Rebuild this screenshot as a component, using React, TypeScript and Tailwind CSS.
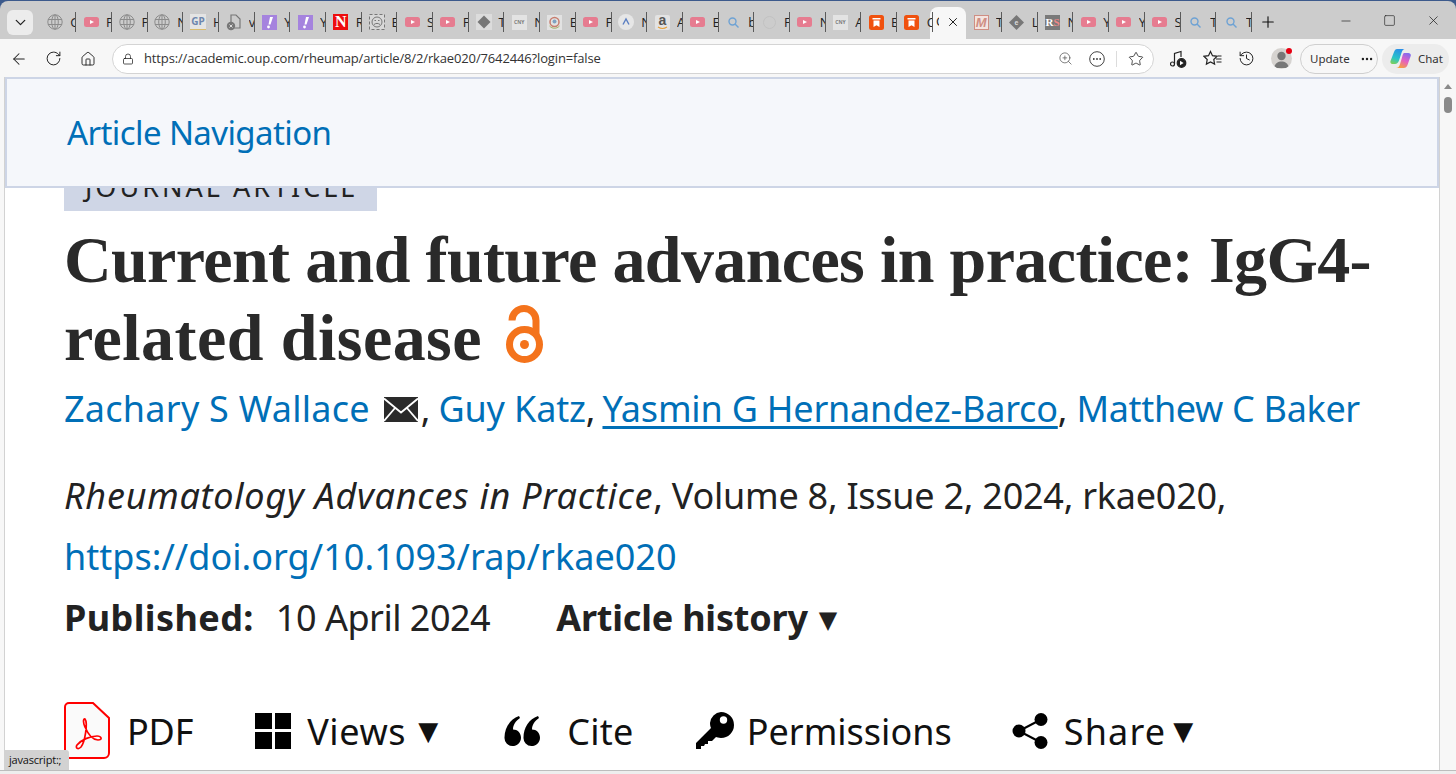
import React from "react";
import { ArrowLeft, RotateCw, Home, Lock, ZoomIn, Star, History, X, Minus, Square, Plus, ChevronDown, MoreHorizontal } from "lucide-react";

const Globe = () => (
  <svg width="16" height="16" viewBox="0 0 16 16" fill="none" stroke="#8c8c8c" strokeWidth="1"><circle cx="8" cy="8" r="7.2"/><ellipse cx="8" cy="8" rx="3.3" ry="7.2"/><path d="M1 5.5h14M1 10.5h14M8 1v14"/></svg>
);
const Yt = () => (
  <svg width="15" height="10" viewBox="0 0 15 10"><rect width="15" height="10" rx="2.5" fill="#e67c90"/><path d="M6 3l4 2-4 2z" fill="#fff"/></svg>
);
const Gp = () => <div className="w-[16px] h-[16px] bg-[#e4e4e4] text-[#6d86ad] text-[10px] font-bold leading-[15px] text-center border-b border-[#d9bb6b]">GP</div>;
const Doc = () => (
  <svg width="16" height="17" viewBox="0 0 16 17" fill="none"><path d="M5 1h5l4 4v9H5z" stroke="#777" strokeWidth="1.2"/><circle cx="5" cy="12" r="4.2" fill="#777"/><path d="M3.500 10.500l3 3m0-3l-3 3" stroke="#ddd"/></svg>
);
const Purple = () => (
  <svg width="15" height="15" viewBox="0 0 15 15"><rect width="15" height="15" fill="#a583de"/><path d="M8 2h3L8.500 9.500H6.500z" fill="#fff"/><circle cx="6.500" cy="12" r="1.400" fill="#fff"/></svg>
);
const RedN = () => <div className="w-[15px] h-[16px] bg-[#ee0d0d] text-white text-[16px] font-bold leading-[16px] text-center font-['Liberation_Serif',serif]">N</div>;
const Face = () => (
  <svg width="16" height="16" viewBox="0 0 16 16" fill="none" stroke="#777"><rect x="0.5" y="0.5" width="15" height="15" fill="#d8d8d8" strokeDasharray="3 2"/><circle cx="8" cy="8" r="5"/><path d="M5 10.500c2-1.500 4-1.500 6 0M5.500 6.500h1.500M9 6.500h1.500"/></svg>
);
const Diamond = () => (
  <svg width="16" height="16" viewBox="0 0 16 16"><rect width="16" height="16" fill="#dcdcdc"/><path d="M8 1.500L14.500 8 8 14.500 1.500 8z" fill="#777"/></svg>
);
const Cny = () => <div className="w-[15px] h-[15px] bg-[#e3e3e3] text-[#7d7d7d] text-[5px] font-bold leading-[15px] text-center">CNY</div>;
const Emblem = () => (
  <svg width="15" height="15" viewBox="0 0 15 15" fill="none"><rect width="15" height="15" fill="#e2e2e2"/><circle cx="7.500" cy="7" r="4.500" stroke="#c77d6e" strokeWidth="1.500"/><circle cx="7.500" cy="6.500" r="2" fill="#7fa2c2"/><path d="M2.500 11c3 3 7 3 10 0" stroke="#9fae64"/></svg>
);
const Lambda = () => (
  <svg width="16" height="16" viewBox="0 0 16 16" fill="none"><circle cx="8" cy="8" r="8" fill="#e6e6e6"/><path d="M5 10.500L8 5l3 5.500" stroke="#5b7fc2" strokeWidth="1.400"/></svg>
);
const Amazon = () => (
  <svg width="15" height="15" viewBox="0 0 15 15" fill="none"><rect width="15" height="15" rx="2" fill="#e3e3e3"/><text x="7.500" y="10" textAnchor="middle" fontSize="14" fontWeight="700" fill="#555" fontFamily="Liberation Sans, sans-serif">a</text><path d="M3 12c3 2 6 2 9 0" stroke="#e5a03c" strokeWidth="1.100"/></svg>
);
const Search = () => (
  <svg width="11" height="11" viewBox="0 0 11 11" fill="none" stroke="#6ea2d4" strokeWidth="1.400"><circle cx="4.500" cy="4.500" r="3.500"/><path d="M7 7l3.500 3.500"/></svg>
);
const Faint = () => <div className="w-[13px] h-[13px] rounded-full border border-[#c2c2c2]" />;
const Book = () => (
  <svg width="15" height="15" viewBox="0 0 15 15"><rect width="15" height="15" rx="2.500" fill="#f0510e"/><path d="M3.500 3h8v1.500h-8zM4.500 5.500h6V12l-3-1.800L4.500 12z" fill="#fff"/></svg>
);
const Mm = () => <div className="w-[15px] h-[15px] bg-[#f3e4e0] border border-[#cf8e83] text-[#cf8e83] text-[13px] font-black italic leading-[13px] text-center font-['Liberation_Sans',sans-serif]">M</div>;
const Coin = () => (
  <svg width="15" height="15" viewBox="0 0 15 15"><path d="M7.500 0L15 7.500 7.500 15 0 7.500z" fill="#777"/><text x="7.500" y="10" textAnchor="middle" fontSize="7" fontWeight="700" fill="#ddd" fontFamily="Liberation Sans, sans-serif">e</text></svg>
);
const Rs = () => <div className="w-[15px] h-[15px] bg-[#7a7a7a] text-white text-[11px] font-bold leading-[15px] text-center font-['Liberation_Serif',serif]">R<span className="text-[#e88]">S</span></div>;

type Tab = [React.ReactNode, string];
const leftTabs: Tab[] = [
  [<Globe />, "G"], [<Yt />, "P"], [<Globe />, "P"], [<Globe />, "N"], [<Gp />, "H"], [<Doc />, "v"],
  [<Purple />, "Y"], [<Purple />, "Y"], [<RedN />, "R"], [<Face />, "E"], [<Yt />, "S"], [<Yt />, "F"],
  [<Diamond />, "T"], [<Cny />, "N"], [<Emblem />, "E"], [<Yt />, "F"], [<Lambda />, "N"], [<Amazon />, "A"],
  [<Yt />, "E"], [<Search />, "b"], [<Faint />, "F"], [<Yt />, "N"], [<Cny />, "A"], [<Book />, "B"], [<Book />, "C"],
];
const rightTabs: Tab[] = [
  [<Mm />, "T"], [<Coin />, "L"], [<Rs />, "N"], [<Yt />, "Y"], [<Yt />, "Y"], [<Yt />, "S"], [<Search />, "T"], [<Search />, "T"],
];

const TabItem = ({ icon, letter }: { icon: React.ReactNode; letter: string }) => (
  <div className="w-[35.700px] h-[20px] flex items-center shrink-0 relative">
    <div className="w-[29.700px] flex justify-center shrink-0">{icon}</div>
    <div className="w-[5px] overflow-hidden text-[13px] leading-[16px] text-[#222] font-['Open_Sans',sans-serif]">{letter}</div>
    <div className="w-px h-[20px] bg-[#5a5a5a] shrink-0" />
  </div>
);

const MusicIcon = () => (
  <svg width="18" height="18" viewBox="0 0 18 18" fill="none" stroke="#222" strokeWidth="1.200"><circle cx="3.500" cy="14" r="2"/><path d="M5.500 14V3.500L12 1.500V7"/><circle cx="12.500" cy="13" r="4.300" fill="#222"/><path d="M11 10.700l3.600 2.300-3.600 2.300z" fill="#fff" stroke="none"/></svg>
);
const FavIcon = () => (
  <svg width="19" height="17" viewBox="0 0 19 17" fill="none" stroke="#222" strokeWidth="1.200"><path d="M7.500 1.500l2 4.200 4.600.6-3.300 3.200.8 4.600-4.100-2.200-4.100 2.200.8-4.600L.9 6.300l4.600-.6z"/><path d="M13 9h5.500M13.500 12h5M15 6h3.500"/></svg>
);
const EllipsisCircle = () => (
  <svg width="16" height="16" viewBox="0 0 16 16" fill="none"><circle cx="8" cy="8" r="7.300" stroke="#444" strokeWidth="1"/><circle cx="4.800" cy="8" r="0.900" fill="#333"/><circle cx="8" cy="8" r="0.900" fill="#333"/><circle cx="11.200" cy="8" r="0.900" fill="#333"/></svg>
);
const Avatar = () => (
  <div className="w-[21px] h-[21px] rounded-full bg-[#d6d3d0] relative">
    <svg width="21" height="21" viewBox="0 0 21 21" className="rounded-full"><circle cx="10.500" cy="8" r="4.200" fill="#777"/><path d="M3 20c1-5 4-6.500 7.500-6.500S17 15 18 20z" fill="#777"/></svg>
    <span className="absolute right-0 top-0 w-[6px] h-[6px] rounded-full bg-[#e60012]" />
  </div>
);
const Copilot = () => (
  <svg width="21" height="21" viewBox="0 0 21 21"><defs><linearGradient id="cpa" x1="0.600" y1="0" x2="0.200" y2="1"><stop offset="0" stopColor="#2b8fe8"/><stop offset="0.600" stopColor="#28c4c8"/><stop offset="1" stopColor="#7cd05a"/></linearGradient><linearGradient id="cpb" x1="0.800" y1="0" x2="0.300" y2="1"><stop offset="0" stopColor="#7d6cf0"/><stop offset="0.500" stopColor="#e45fc4"/><stop offset="1" stopColor="#f7a23c"/></linearGradient></defs><path d="M7 1h7.500c-1.500.5-2.300 1.800-2.800 3.300L9 12.500c-.8 2.200-2 3.500-4 3.500H2.500C.8 16 0 14.500.5 13L4 4C4.800 2 5.500 1 7 1z" fill="url(#cpa)"/><path d="M14.500 5h3.800c1.900 0 2.900 1.500 2.400 3l-3.200 9c-.7 2-2 3-3.700 3H6c2 0 3.100-1.300 3.800-3.300L12 9.500C12.700 7 13 5 14.500 5z" fill="url(#cpb)"/></svg>
);

const OpenAccess = () => (
  <svg width="37" height="58" viewBox="0 0 37 58" fill="none" stroke="#f4731c" strokeWidth="7"><circle cx="18.500" cy="39.500" r="15"/><circle cx="18.500" cy="39.500" r="4.500" fill="#f4731c" stroke="none"/><path d="M6 15.500A12 12 0 0 1 30 15.500V30"/></svg>
);
const Envelope = () => (
  <svg width="34" height="25" viewBox="0 0 34 25"><rect width="34" height="25" fill="#2a2a2a"/><path d="M0 1.500l17 14 17-14M0 24l11-13M34 24L23 11" stroke="#fff" strokeWidth="1.800" fill="none"/></svg>
);
const PdfIcon = () => (
  <svg width="46" height="57" viewBox="0 0 46 57" fill="none"><path d="M5 1h24l16 15v35a5 5 0 0 1-5 5H5a4 4 0 0 1-4-4V5a4 4 0 0 1 4-4z" fill="#fafafa" stroke="#f00" strokeWidth="2"/><path d="M21 17c-2-.5-2 4 0 8 3 7 8 13 13 13 5 0 3.500-4-1-4-7 0-16 4-20 9-2 3 1 5 4 2 4-5 7-24 4-28z" stroke="#f00" strokeWidth="1.700"/></svg>
);
const ViewsIcon = () => (
  <div className="w-[36px] h-[36px] grid grid-cols-2 gap-[3px] shrink-0"><div className="bg-black" /><div className="bg-black" /><div className="bg-black" /><div className="bg-black" /></div>
);
const QuoteIcon = () => (
  <svg width="36" height="30" viewBox="0 0 36 30"><path d="M8.500 30A8 8 0 0 1 .5 21.500C.5 12 6 3 15 0l1 2c-4.500 3-7 7-7 11.500 4.500 0 8 3.500 8 8.200S13 30 8.500 30zM27.500 30a8 8 0 0 1-8-8.500C19.500 12 25 3 34 0l1 2c-4.500 3-7 7-7 11.500 4.500 0 8 3.500 8 8.200S32 30 27.500 30z" fill="#000"/></svg>
);
const KeyIcon = () => (
  <svg width="38" height="37" viewBox="0 0 38 37"><path d="M25 0a13 13 0 0 1 0 26c-2.500 0-4-1-5-1l-4 4h-4v3H9l-1 2H5v3H0v-6l15-15c-.5-1-1-3-1-5A12 12 0 0 1 25 0z" fill="#000"/><circle cx="27.500" cy="8" r="3.700" fill="#fff"/></svg>
);
const ShareIcon = () => (
  <svg width="36" height="36" viewBox="0 0 36 36" fill="#000"><circle cx="7" cy="18" r="6.500"/><circle cx="29" cy="6.500" r="6.500"/><circle cx="29" cy="29.500" r="6.500"/><path d="M7 18L29 6.500M7 18l22 11.500" stroke="#000" strokeWidth="2"/></svg>
);
const Caret = ({ size }: { size: "big" | "small" }) => (
  <span className={size === "big" ? "block mt-0 text-[26px] leading-[36px] font-['DejaVu_Sans',sans-serif] tracking-normal" : "block mt-[4px] text-[24px] leading-[36px] font-['DejaVu_Sans',sans-serif] tracking-normal"}>▼</span>
);

export default function App() {
  return (
    <div className="w-[1456px] h-[774px] overflow-hidden bg-[#3c5a8c] pt-px font-['Noto_Sans',sans-serif]">
      <div className="h-[773px] rounded-t-lg bg-[#cccccc] overflow-hidden flex flex-col">
        {/* tab strip */}
        <div className="h-[38px] flex items-end shrink-0 relative">
          <div className="w-[40.500px] pl-[7px] shrink-0 self-start mt-[9px]">
            <div className="w-[26px] h-[25px] rounded-md bg-[#ececec] flex items-center justify-center"><ChevronDown size={17} strokeWidth={1.800} color="#222" /></div>
          </div>
          <div className="flex items-start h-[32px]">
            <div className="flex pt-[5px]">
              {leftTabs.map((t, i) => <TabItem key={i} icon={t[0]} letter={t[1]} />)}
            </div>
            <div className="w-[36.500px] h-[32px] -ml-[2.800px] rounded-t-lg bg-[#f7f7f7] flex items-center shrink-0 pb-[3px]">
              <span className="w-[9px] pl-[6px] text-[13px] overflow-hidden text-[#222] font-['Open_Sans',sans-serif]">C</span>
              <X size={14} strokeWidth={1.600} color="#111" className="ml-[7px]" />
            </div>
            <div className="flex pt-[5px]">
              {rightTabs.map((t, i) => <TabItem key={i} icon={t[0]} letter={t[1]} />)}
            </div>
            <Plus size={18} strokeWidth={1.500} color="#111" className="ml-[7px] mt-[6px]" />
          </div>
          <div className="ml-auto flex items-center self-start mt-[12px] pr-[15px] gap-[30px]">
            <Minus size={14} strokeWidth={1.200} color="#222" />
            <Square size={13} strokeWidth={1.200} color="#222" />
            <X size={15} strokeWidth={1.200} color="#222" />
          </div>
        </div>

        {/* toolbar */}
        <div className="h-[39px] bg-[#f7f7f7] flex items-center pl-[10px] pr-[6px] shrink-0">
          <ArrowLeft size={18} strokeWidth={1.400} color="#222" />
          <RotateCw size={17} strokeWidth={1.400} color="#222" className="ml-[17px]" />
          <Home size={16} strokeWidth={1.400} color="#222" className="ml-[18px]" />
          <div className="ml-[16px] w-[1042px] h-[30px] rounded-full border border-[#d4d4d4] bg-white flex items-center pl-[9px] pr-[9px]">
            <Lock size={12} strokeWidth={1.500} color="#222" />
            <span className="ml-[10px] text-[13px] text-[#333] font-['Open_Sans',sans-serif] tracking-[-0.140px]">https://academic.oup.com/rheumap/article/8/2/rkae020/7642446?login=false</span>
            <div className="ml-auto flex items-center">
              <ZoomIn size={15} strokeWidth={1.200} color="#555" />
              <span className="ml-[16px]"><EllipsisCircle /></span>
              <div className="ml-[11px] w-px h-[16px] bg-[#dcdcdc]" />
              <Star size={16} strokeWidth={1.300} color="#333" className="ml-[11px]" />
            </div>
          </div>
          <div className="ml-[15px]"><MusicIcon /></div>
          <div className="ml-[16px]"><FavIcon /></div>
          <History size={17} strokeWidth={1.400} color="#222" className="ml-[16px]" />
          <div className="ml-[16px]"><Avatar /></div>
          <div className="ml-[8px] w-[78px] h-[30px] rounded-full border border-[#cfcfcf] flex items-center pl-[9px] gap-[10px] text-[11.500px] text-[#333]">
            Update <MoreHorizontal size={14} strokeWidth={2.200} color="#222" />
          </div>
          <div className="ml-[4px] w-[67px] h-[30px] rounded-full bg-[#ececec] flex items-center pl-[8px] gap-[7px] text-[11.500px] text-[#333]">
            <Copilot /> Chat
          </div>
        </div>

        {/* page */}
        <div className="h-[692px] bg-[#f7f7f7] flex pl-[4px] shrink-0">
          <div className="w-[1436px] h-[693px] bg-white border-l border-r border-[#d2d2d2] relative overflow-hidden shrink-0 -mt-px">
            <div className="relative z-10 h-[111px] bg-[#f5f7fb] border-2 border-[#cdd5e6] pl-[60px] pt-[32px] text-[33px] leading-[44px] text-[#006fb7] tracking-[-0.600px]">
              Article Navigation
            </div>
            <div className="pl-[59px]">
              <div className="w-[313px] h-[62px] -mt-[39px] bg-[#cfd6e6] pl-[21px] pt-[20px] text-[27px] leading-[36px] text-[#222] tracking-[3px] overflow-hidden whitespace-nowrap">
                JOURNAL ARTICLE
              </div>
              <h1 className="mt-[10px] text-[66px] leading-[78px] font-bold text-[#2a2a2a] font-['Liberation_Serif',serif] whitespace-nowrap">
                <div className="tracking-[-0.630px]">Current and future advances in practice: IgG4-</div>
                <div className="flex items-center h-[78px] tracking-[0.450px]">related disease <span className="ml-[24px] mt-[-8px]"><OpenAccess /></span></div>
              </h1>
              <div className="mt-[8px] h-[48px] flex items-center text-[36px] text-[#006fb7] whitespace-nowrap">
                <span className="tracking-[0.250px]">Zachary S Wallace</span>
                <span className="ml-[14px] mr-[3px]"><Envelope /></span>
                <span className="text-[#222]">,</span>
                <span className="ml-[8px] tracking-[-0.150px]">Guy Katz</span>
                <span className="text-[#222]">,</span>
                <span className="ml-[7px] tracking-[-0.200px] underline underline-offset-[4px]">Yasmin G Hernandez-Barco</span>
                <span className="text-[#222]">,</span>
                <span className="ml-[9px] tracking-[-0.330px]">Matthew C Baker</span>
              </div>
              <div className="mt-[39px] h-[48px] flex items-center text-[36px] text-[#222] whitespace-nowrap">
                <span className="italic tracking-[0.730px]">Rheumatology Advances in Practice</span>
                <span className="tracking-[-0.250px]">, Volume 8, Issue 2, 2024, rkae020,</span>
              </div>
              <div className="mt-[13px] h-[48px] flex items-center text-[36px] text-[#006fb7] whitespace-nowrap tracking-[0.030px]">
                https://doi.org/10.1093/rap/rkae020
              </div>
              <div className="mt-[13px] h-[48px] flex items-center text-[36px] text-[#222] whitespace-nowrap">
                <span className="font-bold tracking-[0.400px]">Published:</span>
                <span className="ml-[22px] tracking-[-0.500px]">10 April 2024</span>
                <span className="ml-[66px] font-bold tracking-[-0.200px]">Article history</span>
                <span className="ml-[11px]"><Caret size="small" /></span>
              </div>
              <div className="mt-[60px] h-[57px] flex items-center text-[36px] text-[#111] whitespace-nowrap">
                <PdfIcon />
                <span className="ml-[17px] tracking-[-0.200px] mt-[3px]">PDF</span>
                <span className="ml-[62px]"><ViewsIcon /></span>
                <span className="ml-[16px] tracking-[0.600px] mt-[3px]">Views</span>
                <span className="ml-[12px]"><Caret size="big" /></span>
                <span className="ml-[66px]"><QuoteIcon /></span>
                <span className="ml-[27px] tracking-[0.300px] mt-[3px]">Cite</span>
                <span className="ml-[62px]"><KeyIcon /></span>
                <span className="ml-[13px] mt-[3px]">Permissions</span>
                <span className="ml-[60px]"><ShareIcon /></span>
                <span className="ml-[16px] tracking-[1.200px] mt-[3px]">Share</span>
                <span className="ml-[7px]"><Caret size="big" /></span>
              </div>
            </div>
            <div className="absolute left-0 top-[673px] z-20 w-[64px] h-[20px] rounded-tr-[3px] bg-[#d2d2d2] text-[11px] leading-[20px] pl-[4px] text-[#111] font-['Open_Sans',sans-serif] tracking-[-0.200px]">javascript:;</div>
          </div>
          <div className="w-[16px] flex flex-col items-center pt-[6px]">
            <div className="w-0 h-0 border-l-[4px] border-r-[4px] border-b-[5px] border-l-transparent border-r-transparent border-b-[#8a8a8a]" />
            <div className="mt-[8px] w-[8px] h-[16px] rounded-full bg-[#8a8a8a]" />
          </div>
        </div>
        {/* cut-off page behind the window edge */}
        <div className="h-[4px] bg-[#eeeeee] border-t border-[#bdbdbd] overflow-hidden flex pl-[6px] gap-[14px] text-[11px] leading-[13px] text-[#444] whitespace-nowrap shrink-0">
          <span>1000 of 500</span><span>500 of 500 words</span><span>Ins</span><span>English (Sweden)</span><span>Accessibility: Investigate</span><span>Recovered</span>
        </div>
      </div>
    </div>
  );
}
